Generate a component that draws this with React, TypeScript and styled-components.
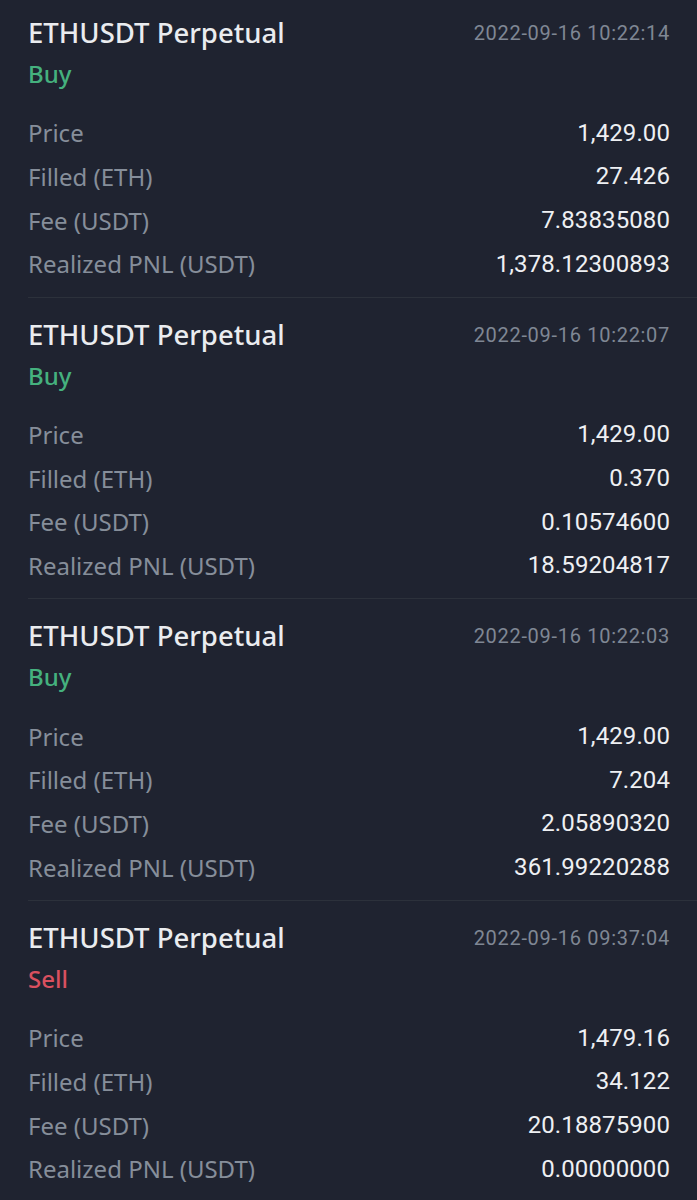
import React from "react";
import styled, { createGlobalStyle } from "styled-components";

const Global = createGlobalStyle`
  html, body {
    margin: 0;
    padding: 0;
    background: #1f2330;
  }
  body {
    font-family: "Noto Sans", "Open Sans", sans-serif;
    -webkit-font-smoothing: antialiased;
  }
`;

const Page = styled.div`
  width: 697px;
  min-height: 1200px;
  background: #1f2330;
  overflow: hidden;
`;

const Card = styled.section`
  margin-left: 28px;
  padding: 19px 27px 11px 0;
  border-bottom: 1px solid #2c313b;
  &:first-child {
    padding-top: 15px;
  }
`;

const Header = styled.div`
  display: flex;
  justify-content: space-between;
  align-items: center;
  height: 36px;
`;

const Title = styled.div`
  font-size: 27.5px;
  font-weight: 500;
  color: #eaecef;
  line-height: 36px;
`;

const Time = styled.div`
  font-family: Roboto, "Noto Sans", sans-serif;
  font-size: 20px;
  letter-spacing: 0.7px;
  color: #7f8794;
  line-height: 36px;
`;

const Side = styled.div<{ $sell?: boolean }>`
  margin-top: 7px;
  height: 32px;
  line-height: 32px;
  font-size: 24px;
  font-weight: 500;
  color: ${(p) => (p.$sell ? "#d9505f" : "#45b17e")};
`;

const Rows = styled.div`
  margin-top: 21px;
  display: flex;
  flex-direction: column;
`;

const Row = styled.div`
  display: flex;
  justify-content: space-between;
  align-items: center;
  height: 43.67px;
`;

const Label = styled.span`
  font-size: 24px;
  color: #868e9a;
`;

const Value = styled.span`
  font-family: Roboto, "Noto Sans", sans-serif;
  font-size: 24px;
  letter-spacing: 0.1px;
  color: #eef0f3;
`;

type Trade = {
  time: string;
  side: "Buy" | "Sell";
  price: string;
  filled: string;
  fee: string;
  pnl: string;
};

const trades: Trade[] = [
  { time: "2022-09-16 10:22:14", side: "Buy", price: "1,429.00", filled: "27.426", fee: "7.83835080", pnl: "1,378.12300893" },
  { time: "2022-09-16 10:22:07", side: "Buy", price: "1,429.00", filled: "0.370", fee: "0.10574600", pnl: "18.59204817" },
  { time: "2022-09-16 10:22:03", side: "Buy", price: "1,429.00", filled: "7.204", fee: "2.05890320", pnl: "361.99220288" },
  { time: "2022-09-16 09:37:04", side: "Sell", price: "1,479.16", filled: "34.122", fee: "20.18875900", pnl: "0.00000000" },
];

export default function App() {
  return (
    <Page>
      <Global />
      {trades.map((t, i) => (
        <Card key={i}>
          <Header>
            <Title>ETHUSDT Perpetual</Title>
            <Time>{t.time}</Time>
          </Header>
          <Side $sell={t.side === "Sell"}>{t.side}</Side>
          <Rows>
            <Row><Label>Price</Label><Value>{t.price}</Value></Row>
            <Row><Label>Filled (ETH)</Label><Value>{t.filled}</Value></Row>
            <Row><Label>Fee (USDT)</Label><Value>{t.fee}</Value></Row>
            <Row><Label>Realized PNL (USDT)</Label><Value>{t.pnl}</Value></Row>
          </Rows>
        </Card>
      ))}
    </Page>
  );
}
